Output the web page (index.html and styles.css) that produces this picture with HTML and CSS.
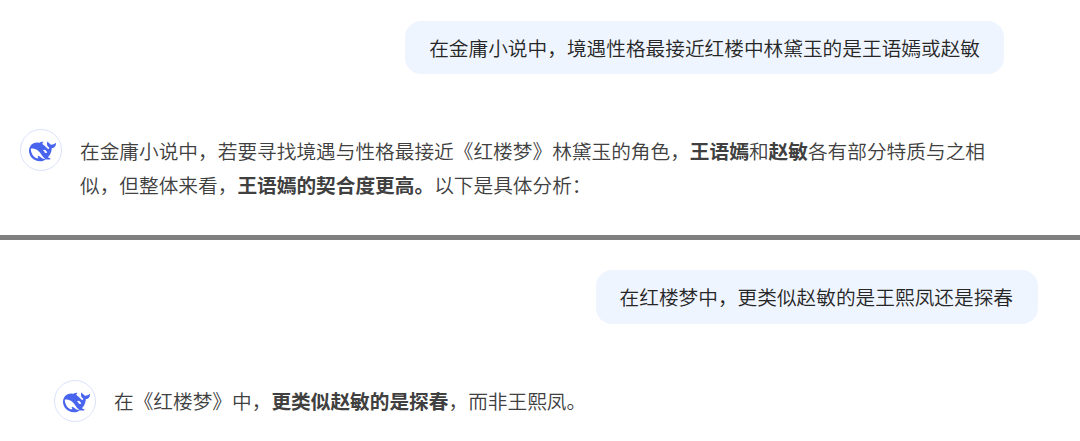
FILE: index.html
```
<!DOCTYPE html>
<html lang="zh-CN">
<head>
    <meta charset="UTF-8">
    <meta name="viewport" content="width=device-width, initial-scale=1.0">
    <title>DeepSeek</title>
    <link rel="stylesheet" href="styles.css">
</head>
<body>

<!-- whale logo, reused by every reply -->
<svg class="sprite" width="0" height="0">
    <symbol id="whale" viewBox="0 0 24 24">
        <path fill-rule="evenodd" d="M23.748 4.482c-.254-.124-.364.113-.512.234-.051.039-.094.09-.137.136-.372.397-.806.657-1.373.626-.829-.046-1.537.214-2.163.848-.133-.782-.575-1.248-1.247-1.548-.352-.156-.708-.311-.955-.65-.172-.241-.219-.51-.305-.774-.055-.16-.11-.323-.293-.35-.2-.031-.278.136-.356.276-.313.572-.434 1.202-.422 1.84.027 1.436.633 2.58 1.838 3.393.137.093.172.187.129.323-.082.28-.18.552-.266.833-.055.179-.137.217-.329.14a5.526 5.526 0 01-1.736-1.18c-.857-.828-1.631-1.742-2.597-2.458a11.365 11.365 0 00-.689-.471c-.985-.957.13-1.743.388-1.836.27-.098.093-.432-.779-.428-.872.004-1.67.295-2.687.684a3.055 3.055 0 01-.465.137 9.597 9.597 0 00-2.883-.102c-1.885.21-3.39 1.102-4.497 2.623C.082 8.606-.231 10.684.152 12.85c.403 2.284 1.569 4.175 3.36 5.653 1.858 1.533 3.997 2.284 6.438 2.14 1.482-.085 3.133-.284 4.994-1.86.47.234.962.327 1.78.397.63.059 1.236-.03 1.705-.128.735-.156.684-.837.419-.961-2.155-1.004-1.682-.595-2.113-.926 1.096-1.296 2.746-2.642 3.392-7.003.05-.347.007-.565 0-.845-.004-.17.035-.237.23-.256a4.173 4.173 0 001.545-.475c1.396-.763 1.96-2.015 2.093-3.517.02-.23-.004-.467-.247-.588zM11.581 18c-2.089-1.642-3.102-2.183-3.52-2.16-.392.024-.321.471-.235.763.09.288.207.486.371.739.114.167.192.416-.113.603-.673.416-1.842-.14-1.897-.167-1.361-.802-2.5-1.86-3.301-3.307-.774-1.393-1.224-2.887-1.298-4.482-.02-.386.093-.522.477-.592a4.696 4.696 0 011.529-.039c2.132.312 3.946 1.265 5.468 2.774.868.86 1.525 1.887 2.202 2.891.72 1.066 1.494 2.082 2.48 2.914.348.292.625.514.891.677-.802.09-2.14.11-3.054-.614zM12.3 11.2c.7-1 2-.9 2.7-.1.8.8 1.3 1.6.9 2-.6.4-1.5.3-2-.2-.4-.5-.2-1-.5-1.300-.3-.3-.9-.1-1.100-.4z"/>
    </symbol>
</svg>

<div class="chat chat-first">
    <div class="question">在金庸小说中，境遇性格最接近红楼中林黛玉的是王语嫣或赵敏</div>
    <div class="answer">
        <div class="avatar"><svg><use href="#whale"/></svg></div>
        <p>在金庸小说中，若要寻找境遇与性格最接近《红楼梦》林黛玉的角色，<b>王语嫣</b>和<b>赵敏</b>各有部分特质与之相似，但整体来看，<b>王语嫣的契合度更高。</b>以下是具体分析：</p>
    </div>
</div>

<div class="chat chat-second">
    <div class="question">在红楼梦中，更类似赵敏的是王熙凤还是探春</div>
    <div class="answer">
        <div class="avatar"><svg><use href="#whale"/></svg></div>
        <p>在《红楼梦》中，<b>更类似赵敏的是探春</b>，而非王熙凤。</p>
    </div>
</div>

</body>
</html>
```

FILE: styles.css
```
* {
    box-sizing: border-box;
}
body {
    margin: 0;
    background-color: #fff;
    font-family: "Noto Sans CJK SC", sans-serif;
    font-size: 19.68px;
    font-weight: 350;
    color: #404040;
    text-spacing-trim: space-all;
    overflow: hidden;
}
.sprite {
    display: block;
}
.chat {
    display: flex;
    flex-direction: column;
    gap: 55px;
}
.chat-first {
    height: 240px;
    padding: 21px 76px 0 20px;
    border-bottom: 5px solid #7f7f7f;
}
.chat-second {
    height: 201px;
    gap: 56px;
    padding: 30px 42px 0 54px;
}
.question {
    align-self: flex-end;
    height: 53px;
    padding: 0 24px;
    line-height: 53px;
    border-radius: 16px;
    background-color: #eff5ff;
    color: #262626;
    white-space: nowrap;
}
.chat-second .question {
    height: 54px;
    padding-right: 25px;
}
.answer {
    display: flex;
    gap: 18px;
}
.avatar {
    flex: none;
    display: flex;
    justify-content: center;
    align-items: center;
    width: 42px;
    height: 42px;
    border: 1px solid #dbe2fa;
    border-radius: 50%;
}
.avatar svg {
    width: 27px;
    height: 27px;
    margin-left: 2px;
    margin-top: 2px;
    fill: #4965ee;
}
.answer p {
    width: 910px;
    margin: 5px 0 0;
    line-height: 34px;
}
.chat-second .answer p {
    margin-top: 4px;
}
b {
    font-weight: 700;
}
```
